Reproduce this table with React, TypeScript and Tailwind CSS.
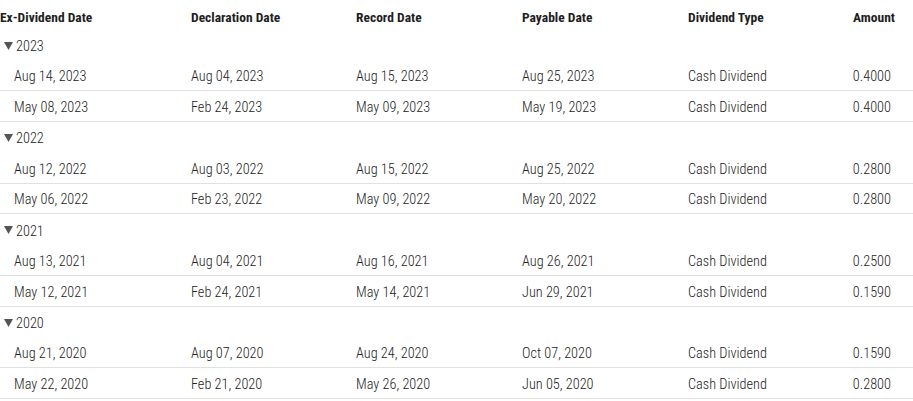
type Row = { ex: string; decl: string; rec: string; pay: string; type: string; amt: string };

const groups: { year: string; rows: Row[] }[] = [
  {
    year: "2023",
    rows: [
      { ex: "Aug 14, 2023", decl: "Aug 04, 2023", rec: "Aug 15, 2023", pay: "Aug 25, 2023", type: "Cash Dividend", amt: "0.4000" },
      { ex: "May 08, 2023", decl: "Feb 24, 2023", rec: "May 09, 2023", pay: "May 19, 2023", type: "Cash Dividend", amt: "0.4000" },
    ],
  },
  {
    year: "2022",
    rows: [
      { ex: "Aug 12, 2022", decl: "Aug 03, 2022", rec: "Aug 15, 2022", pay: "Aug 25, 2022", type: "Cash Dividend", amt: "0.2800" },
      { ex: "May 06, 2022", decl: "Feb 23, 2022", rec: "May 09, 2022", pay: "May 20, 2022", type: "Cash Dividend", amt: "0.2800" },
    ],
  },
  {
    year: "2021",
    rows: [
      { ex: "Aug 13, 2021", decl: "Aug 04, 2021", rec: "Aug 16, 2021", pay: "Aug 26, 2021", type: "Cash Dividend", amt: "0.2500" },
      { ex: "May 12, 2021", decl: "Feb 24, 2021", rec: "May 14, 2021", pay: "Jun 29, 2021", type: "Cash Dividend", amt: "0.1590" },
    ],
  },
  {
    year: "2020",
    rows: [
      { ex: "Aug 21, 2020", decl: "Aug 07, 2020", rec: "Aug 24, 2020", pay: "Oct 07, 2020", type: "Cash Dividend", amt: "0.1590" },
      { ex: "May 22, 2020", decl: "Feb 21, 2020", rec: "May 26, 2020", pay: "Jun 05, 2020", type: "Cash Dividend", amt: "0.2800" },
    ],
  },
];

const cols = "grid grid-cols-[191px_165px_166px_166px_1fr_auto] pr-[18px]";

export default function App() {
  return (
    <div
      className="w-[913px] bg-white"
      style={{ fontFamily: '"Roboto Condensed", "Liberation Sans Narrow", sans-serif' }}
    >
      <div className={`${cols} h-[29.7px] items-center pt-[5px] text-[13.5px] font-bold text-[#1e1e1e] leading-none`}>
        <div>Ex-Dividend Date</div>
        <div>Declaration Date</div>
        <div>Record Date</div>
        <div>Payable Date</div>
        <div>Dividend Type</div>
        <div className="text-right">Amount</div>
      </div>
      {groups.map((g) => (
        <div key={g.year}>
          <div className="h-[30.8px] flex items-center pt-[2px] pl-[4px] text-[14.3px] font-light text-[#222] leading-none">
            <svg width="9" height="8" viewBox="0 0 9 8" className="mr-[3px] mb-[1px]">
              <polygon points="0,0 9,0 4.5,8" fill="#555" />
            </svg>
            <span>{g.year}</span>
          </div>
          {g.rows.map((r, i) => (
            <div
              key={i}
              className={`${cols} h-[30.8px] items-center pt-[2px] border-b border-[#e1e1e1] text-[14.3px] font-light text-[#222] leading-none`}
            >
              <div className="pl-[14px]">{r.ex}</div>
              <div>{r.decl}</div>
              <div>{r.rec}</div>
              <div>{r.pay}</div>
              <div>{r.type}</div>
              <div className="text-right pr-[4px]">{r.amt}</div>
            </div>
          ))}
        </div>
      ))}
    </div>
  );
}
